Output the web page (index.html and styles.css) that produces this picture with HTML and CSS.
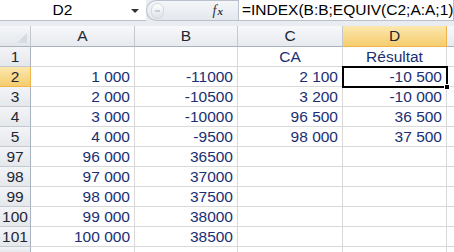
FILE: index.html
```html
<!DOCTYPE html>
<html>
<head>
<meta charset="utf-8">
<link rel="stylesheet" href="styles.css">
</head>
<body>
<div class="fbar">
  <div class="namebox"><span class="name">D2</span><span class="arrow"></span></div>
  <div class="btns">
    <span class="pill"></span>
    <span class="fx"><i>f</i><i class="x">x</i></span>
  </div>
  <div class="formula">=INDEX(B:B;EQUIV(C2;A:A;1)</div>
</div>
<div class="sheet">
  <div class="corner"><span class="tri"></span></div>
  <div class="ch">A</div><div class="ch">B</div><div class="ch">C</div><div class="ch sel">D</div><div class="ch last"></div>

  <div class="rh">1</div><div class="c"></div><div class="c"></div><div class="c ctr">CA</div><div class="c ctr">Résultat</div><div class="c last"></div>
  <div class="rh sel">2</div><div class="c">1 000</div><div class="c">-11000</div><div class="c">2 100</div><div class="c active">-10 500<span class="handle"></span></div><div class="c last"></div>
  <div class="rh">3</div><div class="c">2 000</div><div class="c">-10500</div><div class="c">3 200</div><div class="c">-10 000</div><div class="c last"></div>
  <div class="rh">4</div><div class="c">3 000</div><div class="c">-10000</div><div class="c">96 500</div><div class="c">36 500</div><div class="c last"></div>
  <div class="rh">5</div><div class="c">4 000</div><div class="c">-9500</div><div class="c">98 000</div><div class="c">37 500</div><div class="c last"></div>
  <div class="rh">97</div><div class="c">96 000</div><div class="c">36500</div><div class="c"></div><div class="c"></div><div class="c last"></div>
  <div class="rh">98</div><div class="c">97 000</div><div class="c">37000</div><div class="c"></div><div class="c"></div><div class="c last"></div>
  <div class="rh">99</div><div class="c">98 000</div><div class="c">37500</div><div class="c"></div><div class="c"></div><div class="c last"></div>
  <div class="rh">100</div><div class="c">99 000</div><div class="c">38000</div><div class="c"></div><div class="c"></div><div class="c last"></div>
  <div class="rh">101</div><div class="c">100 000</div><div class="c">38500</div><div class="c"></div><div class="c"></div><div class="c last"></div>
  <div class="rh stub"></div><div class="c stub"></div><div class="c stub"></div><div class="c stub"></div><div class="c stub"></div><div class="c stub last"></div>
</div>
</body>
</html>
```
FILE: styles.css
```css
* { box-sizing: border-box; }
html, body { margin: 0; padding: 0; }
body {
  width: 454px;
  height: 252px;
  overflow: hidden;
  background: #fff;
  font-family: "Liberation Sans", Arial, sans-serif;
  font-size: 15.5px;
}
.fbar {
  display: flex;
  height: 26px;
  background: #e9edf2;
  padding-bottom: 5px;
}
.namebox {
  width: 146px;
  background: #fff;
  border-bottom: 1px solid #b9c2cc;
  display: flex;
  align-items: center;
}
.name {
  width: 125px;
  text-align: center;
  color: #000;
}
.arrow {
  width: 0; height: 0;
  border-left: 4px solid transparent;
  border-right: 4px solid transparent;
  border-top: 4px solid #333;
  margin-left: 6px;
  margin-top: 2px;
}
.btns {
  width: 92px;
  display: flex;
  align-items: center;
  background: linear-gradient(#f4f6f9, #e4e8ee);
  border-top-left-radius: 11px;
  border-bottom-left-radius: 11px;
  border: 1px solid #b9c2cc;
  border-right: none;
}
.pill {
  width: 13px;
  height: 16px;
  border-radius: 7px;
  background: linear-gradient(#ffffff, #dde2e8);
  border: 1px solid #d2d8df;
  margin-left: 4px;
  position: relative;
}
.pill::after {
  content: "";
  position: absolute;
  left: 3px; top: 6px;
  width: 5px; height: 2px;
  background: #c8cdd4;
}
.fx {
  margin-left: auto;
  margin-right: 15px;
  font-family: "Liberation Serif", "Times New Roman", serif;
  font-size: 14px;
  color: #333;
  white-space: nowrap;
}
.fx .x { font-size: 11px; font-weight: bold; margin-left: 1px; }
.formula {
  flex: 1;
  background: #fff;
  border: 1px solid #b9c2cc;
  border-top: none;
  padding-left: 3px;
  display: flex;
  align-items: center;
  white-space: nowrap;
  overflow: hidden;
  color: #000;
}
.sheet {
  display: grid;
  grid-template-columns: 31px 104px 103px 105px 104px 1fr;
  grid-template-rows: 21px repeat(10, 20px) 5px;
}
.corner {
  background: linear-gradient(#f5f6f8, #e3e7ec);
  border-right: 1px solid #c4c9d0;
  border-bottom: 1px solid #a9b3bf;
  position: relative;
}
.tri {
  position: absolute;
  right: 3px; bottom: 3px;
  width: 0; height: 0;
  border-left: 10px solid transparent;
  border-bottom: 10px solid #d7dbe0;
}
.ch {
  background: linear-gradient(#f7f8fa, #e7eaee);
  border-right: 1px solid #c4c9d0;
  border-bottom: 1px solid #a9b3bf;
  text-align: center;
  line-height: 20px;
  color: #1e2733;
}
.ch.sel {
  background: linear-gradient(#fbe7ae, #f6cd6e);
  border-right-color: #f0b54a;
  border-bottom-color: #f0b54a;
}
.ch.last { border-right: none; }
.rh {
  background: linear-gradient(#f3f4f6, #e5e8ec);
  border-right: 1px solid #a9b3bf;
  border-bottom: 1px solid #c4c9d0;
  text-align: center;
  line-height: 19px;
  color: #1e2733;
}
.rh.sel {
  background: linear-gradient(#fbe7ae, #f6cd6e);
  border-bottom-color: #f0b54a;
  border-right-color: #f0b54a;
}
.c {
  border-right: 1px solid #d9d9d9;
  border-bottom: 1px solid #d9d9d9;
  text-align: right;
  padding-right: 4px;
  line-height: 19px;
  color: #1a2f72;
  white-space: nowrap;
  position: relative;
}
.stub { border-bottom: none; }
.c.ctr { text-align: center; padding-right: 0; }
.c.last { border-right: none; }
.c.active {
  outline: 2px solid #000;
  outline-offset: -1px;
  z-index: 2;
}
.handle {
  position: absolute;
  right: -4px;
  bottom: -4px;
  width: 6px;
  height: 6px;
  background: #000;
  border: 1px solid #fff;
}
```
